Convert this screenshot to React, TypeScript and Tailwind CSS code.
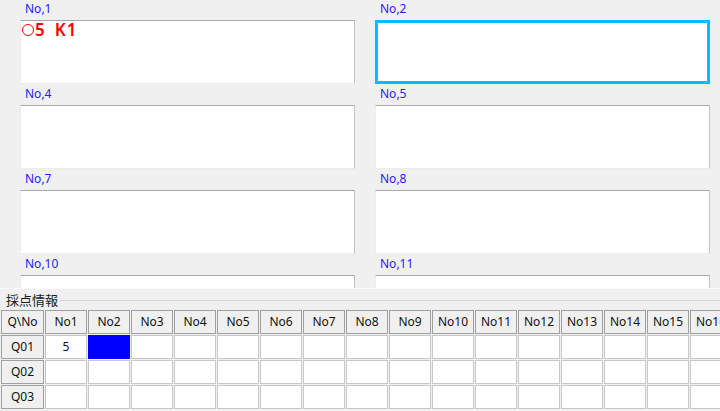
import React from "react"

const font = { fontFamily: '"Meiryo UI", "Noto Sans", "Noto Sans CJK JP", sans-serif' }

const rows = [
  ["No,1", "No,2"],
  ["No,4", "No,5"],
  ["No,7", "No,8"],
  ["No,10", "No,11"],
]

const cols = Array.from({ length: 16 }, (_, i) => `No${i + 1}`)
const qs = ["Q01", "Q02", "Q03"]

function AnswerBox({ label, focused, children }: { label: string; focused?: boolean; children?: React.ReactNode }) {
  return (
    <div className="w-[335px]">
      <div className="h-[20px] pl-[5px] pt-[1px] text-[12px] leading-[16px] text-[#2a1aff]">{label}</div>
      <div
        className={
          focused
            ? "h-[64px] bg-white border-[3px] border-[#00bfff]"
            : "h-[64px] bg-white border border-t-[#a9a9a9] border-r-[#c4c4c4] border-l-[#ececec] border-b-[#ececec]"
        }
      >
        {children}
      </div>
    </div>
  )
}

export default function App() {
  return (
    <div className="w-[720px] h-[411px] bg-[#f0f0f0] overflow-hidden flex flex-col" style={font}>
      <div className="h-[288px] overflow-hidden pl-[20px] flex flex-col gap-[1px]">
        {rows.map((r, i) => (
          <div key={i} className="flex gap-[20px]">
            <AnswerBox label={r[0]}>
              {i === 0 && (
                <div className="pl-[1px] pt-[1px] text-[17px] leading-[16px] font-semibold text-[#ff0000] flex items-center">
                  <span className="inline-block w-[12px] h-[12px] rounded-full border-[1.5px] border-[#ff0000] mr-[1px]" />
                  <span>5</span>
                  <span className="ml-[10px] tracking-[1px]">K1</span>
                </div>
              )}
            </AnswerBox>
            <AnswerBox label={r[1]} focused={i === 0} />
          </div>
        ))}
      </div>

      <div className="flex-1 border-t border-t-[#fbfbfb] relative">
        <div className="flex items-center h-[21px]">
          <span className="pl-[6px] pr-[2px] text-[13px] leading-[16px] text-[#1a1a1a]">採点情報</span>
          <div className="flex-1 h-[1px] bg-[#d8d8d8] mt-[2px]" />
        </div>
        <div className="pl-[1px] flex flex-col gap-[1px]">
          <div className="flex gap-[1px]">
            <div className="w-[43px] h-[24px] shrink-0 bg-[#f0f0f0] border border-[#a0a0a0] flex items-center justify-center text-[12px] text-[#111]">
              Q\No
            </div>
            {cols.map((c) => (
              <div
                key={c}
                className="w-[42px] h-[24px] shrink-0 bg-[#f0f0f0] border border-[#a0a0a0] flex items-center justify-center text-[12px] text-[#111]"
              >
                {c}
              </div>
            ))}
          </div>
          {qs.map((q, qi) => (
            <div key={q} className="flex gap-[1px]">
              <div className="w-[43px] h-[24px] shrink-0 bg-[#f0f0f0] border border-[#a0a0a0] flex items-center justify-center text-[12px] text-[#111]">
                {q}
              </div>
              {cols.map((c, ci) => (
                <div
                  key={c}
                  className={
                    qi === 0 && ci === 1
                      ? "w-[42px] h-[24px] shrink-0 bg-[#0000ff]"
                      : "w-[42px] h-[24px] shrink-0 bg-white border border-[#c8c8c8] flex items-center justify-center text-[12px] text-[#111]"
                  }
                >
                  {qi === 0 && ci === 0 ? "5" : ""}
                </div>
              ))}
            </div>
          ))}
        </div>
      </div>
    </div>
  )
}
